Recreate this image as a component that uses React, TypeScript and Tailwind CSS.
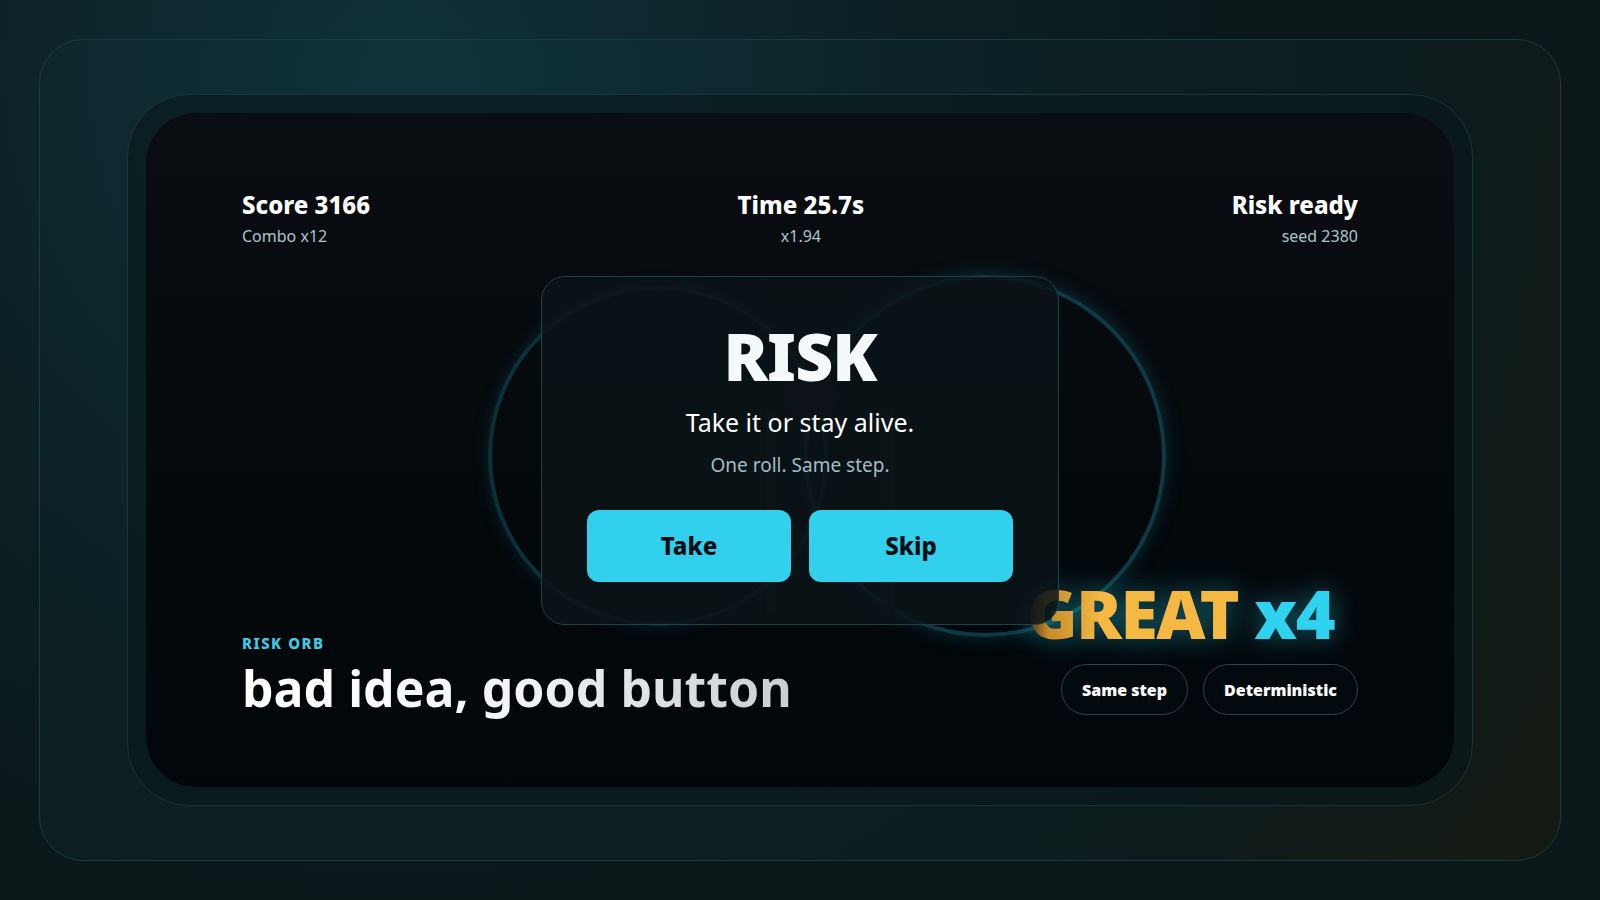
export default function App() {
  const f = { fontFamily: '"Noto Sans", "Open Sans", sans-serif' };
  return (
    <div
      style={f}
      className="w-[1600px] h-[900px] overflow-hidden bg-[#0b1719] bg-[radial-gradient(circle_at_25%_8%,#0f3038_0%,#0c2024_35%,#0b1719_60%),radial-gradient(circle_at_85%_95%,#1c1e10_0%,transparent_40%)] p-[39px]"
    >
      <div className="w-full h-full rounded-[44px] border border-[#1c3b40] bg-[radial-gradient(circle_at_25%_5%,#0f323a_0%,#0c2226_40%,#0d1b1c_75%,#151a12_100%)] px-[87px] pt-[54px] pb-[54px]">
        <div className="w-full h-full rounded-[62px] border border-[#1a3538] bg-[#08181b]/60 p-[18px]">
          <div className="relative w-full h-full rounded-[50px] bg-[linear-gradient(180deg,#0a0e12_0%,#03080b_60%,#01060a_100%)] overflow-hidden px-[96px] pt-[76px] pb-[64px] flex flex-col justify-between">
            {/* canvas */}
            <div className="absolute left-[342px] top-[173px] w-[340px] h-[340px] rounded-full border-[4px] border-[#0b3039] shadow-[0_0_16px_rgba(20,120,140,0.25)]" />
            <div className="absolute left-[658px] top-[162px] w-[362px] h-[362px] rounded-full border-[4px] border-[#0d3a44] shadow-[0_0_18px_rgba(20,120,140,0.35)]" />
            <div className="absolute left-[620px] top-[296px] w-[10px] h-[206px] bg-[#12180f]" />
            <div className="absolute left-[738px] top-[296px] w-[10px] h-[206px] bg-[#12180f]" />
            <div className="absolute left-[640px] top-[258px] w-[50px] h-[50px] rounded-full bg-[#1a0d18]" />

            {/* HUD */}
            <div className="relative flex justify-between items-start text-white">
              <div>
                <div className="text-[24px] font-extrabold leading-[32px]">Score 3166</div>
                <div className="text-[16px] text-[#a9c6cc] leading-[30px]">Combo x12</div>
              </div>
              <div className="text-center">
                <div className="text-[24px] font-extrabold leading-[32px]">Time 25.7s</div>
                <div className="text-[16px] text-[#a9c6cc] leading-[30px]">x1.94</div>
              </div>
              <div className="text-right">
                <div className="text-[24px] font-extrabold leading-[32px]">Risk ready</div>
                <div className="text-[16px] text-[#a9c6cc] leading-[30px]">seed 2380</div>
              </div>
            </div>

            {/* GREAT */}
            <div className="absolute right-[120px] top-[460px] text-[68px] font-black leading-[80px] tracking-[-1.5px] drop-shadow-[0_0_14px_rgba(45,212,240,0.45)]">
              <span className="bg-[linear-gradient(90deg,#3a3015_0%,#c78c2c_10%,#f5b843_35%)] bg-clip-text text-transparent">GREAT</span>
              <span className="text-[#2fd3ef]"> x4</span>
            </div>

            {/* bottom */}
            <div className="relative flex justify-between items-end">
              <div>
                <div className="text-[15px] font-extrabold tracking-[1.5px] text-[#3fcbe6] leading-[20px]">RISK ORB</div>
                <div className="text-[50px] font-bold leading-[70px] bg-[linear-gradient(90deg,#ffffff_0%,#f2f4f5_50%,#c9cfd2_100%)] bg-clip-text text-transparent">bad idea, good button</div>
              </div>
              <div className="flex gap-[15px] mb-[8px]">
                <div className="h-[51px] px-[20px] rounded-full border border-[#27474d] bg-[#030a0d] text-white font-black text-[16px] flex items-center">Same step</div>
                <div className="h-[51px] px-[20px] rounded-full border border-[#27474d] bg-[#030a0d] text-white font-black text-[16px] flex items-center">Deterministic</div>
              </div>
            </div>

            {/* modal */}
            <div className="absolute left-[395px] top-[163px] w-[518px] h-[349px] rounded-[24px] border border-[#1f4047] bg-[#0a1418]/85 flex flex-col items-center pt-[42px]">
              <div className="text-[66px] font-black text-[#f5f9fc] leading-[72px] tracking-[-1px]">RISK</div>
              <div className="mt-[15px] text-[25px] text-white leading-[32px]">Take it or stay alive.</div>
              <div className="mt-[14px] text-[19px] text-[#a5bcc4] leading-[26px]">One roll. Same step.</div>
              <div className="mt-[32px] flex gap-[18px]">
                <div className="w-[204px] h-[72px] rounded-[12px] bg-[#31d0ed] flex items-center justify-center text-[24px] font-extrabold text-[#061014]">Take</div>
                <div className="w-[204px] h-[72px] rounded-[12px] bg-[#31d0ed] flex items-center justify-center text-[24px] font-extrabold text-[#061014]">Skip</div>
              </div>
            </div>
          </div>
        </div>
      </div>
    </div>
  );
}
